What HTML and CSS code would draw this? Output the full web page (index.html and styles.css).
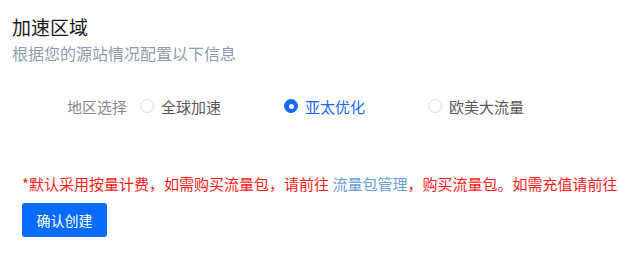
FILE: index.html
```html
<!DOCTYPE html>
<html lang="zh-CN">
<head>
    <meta charset="UTF-8">
    <meta name="viewport" content="width=device-width, initial-scale=1.0">
    <title>加速区域</title>
    <link rel="stylesheet" href="styles.css">
</head>
<body>
    <div class="page">
        <h1 class="title">加速区域</h1>
        <p class="subtitle">根据您的源站情况配置以下信息</p>

        <div class="form-row">
            <span class="form-label">地区选择</span>
            <div class="radio-group">
                <label class="radio">
                    <span class="radio-dot"></span>
                    <span class="radio-text">全球加速</span>
                </label>
                <label class="radio checked">
                    <span class="radio-dot"></span>
                    <span class="radio-text">亚太优化</span>
                </label>
                <label class="radio">
                    <span class="radio-dot"></span>
                    <span class="radio-text">欧美大流量</span>
                </label>
            </div>
        </div>

        <p class="notice">*默认采用按量计费，如需购买流量包，请前往 <a href="#" class="notice-link">流量包管理</a>，购买流量包。如需充值请前往费用中心进行充值。</p>

        <button class="btn-primary">确认创建</button>
    </div>
</body>
</html>
```

FILE: styles.css
```css
* {
    margin: 0;
    padding: 0;
    box-sizing: border-box;
}

body {
    font-family: "Noto Sans CJK SC", "Microsoft YaHei", sans-serif;
    background-color: #fff;
    overflow: hidden;
}

.page {
    padding: 14px 0 0 12px;
    white-space: nowrap;
    overflow: hidden;
}

.title {
    font-size: 19px;
    font-weight: normal;
    line-height: 26px;
    color: #1a1a1a;
}

.subtitle {
    margin-top: 1px;
    font-size: 16px;
    line-height: 24px;
    color: #8d9bb0;
}

/* region selector */
.form-row {
    display: flex;
    align-items: center;
    height: 24px;
    margin-top: 29px;
    padding-left: 55px;
}

.form-label {
    font-size: 15px;
    color: #8a8a8a;
    margin-right: 13px;
}

.radio-group {
    display: flex;
}

.radio {
    display: flex;
    align-items: center;
    width: 144px;
    cursor: pointer;
}

.radio-dot {
    width: 14px;
    height: 14px;
    border: 1px solid #dcdfe6;
    border-radius: 50%;
    margin-right: 7px;
    position: relative;
}

.radio-text {
    font-size: 15px;
    color: #5a5a5a;
}

.radio.checked .radio-dot {
    background-color: #1668ff;
    border-color: #1668ff;
}

.radio.checked .radio-dot::after {
    content: "";
    position: absolute;
    width: 5px;
    height: 5px;
    border-radius: 50%;
    background-color: #fff;
    left: 3.5px;
    top: 3.5px;
}

.radio.checked .radio-text {
    color: #1668ff;
}

.notice {
    margin-top: 55px;
    padding-left: 10px;
    font-size: 15px;
    line-height: 22px;
    color: #ff1a1a;
}

.notice-link {
    color: #6a9ed4;
    text-decoration: none;
}

.btn-primary {
    display: block;
    margin: 8px 0 0 10px;
    width: 85px;
    height: 34px;
    border: none;
    border-radius: 3px;
    background-color: #0a6cff;
    color: #fff;
    font-family: inherit;
    font-size: 14px;
    cursor: pointer;
}
```
